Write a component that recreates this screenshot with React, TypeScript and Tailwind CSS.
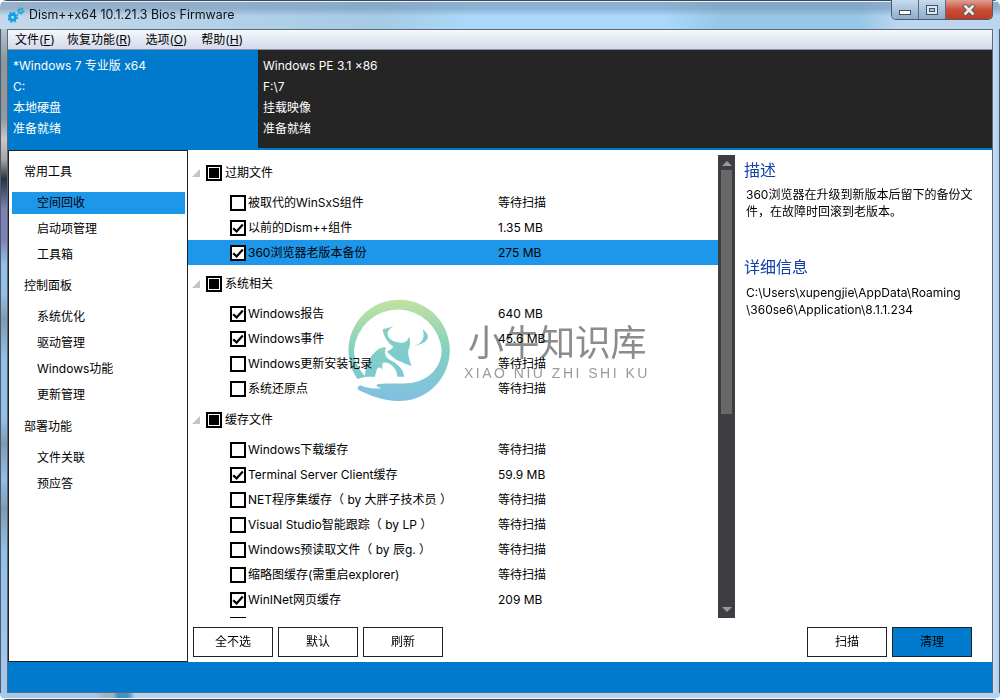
import { Fragment } from "react";

const font = "font-['Inter','Noto_Sans_CJK_SC',sans-serif]";

type Row = { label: string; value: string; checked?: boolean; selected?: boolean };
type Group = { title: string; rows: Row[] };

const groups: Group[] = [
  {
    title: "过期文件",
    rows: [
      { label: "被取代的WinSxS组件", value: "等待扫描" },
      { label: "以前的Dism++组件", value: "1.35 MB", checked: true },
      { label: "360浏览器老版本备份", value: "275 MB", checked: true, selected: true },
    ],
  },
  {
    title: "系统相关",
    rows: [
      { label: "Windows报告", value: "640 MB", checked: true },
      { label: "Windows事件", value: "45.6 MB", checked: true },
      { label: "Windows更新安装记录", value: "等待扫描" },
      { label: "系统还原点", value: "等待扫描" },
    ],
  },
  {
    title: "缓存文件",
    rows: [
      { label: "Windows下载缓存", value: "等待扫描" },
      { label: "Terminal Server Client缓存", value: "59.9 MB", checked: true },
      { label: "NET程序集缓存（ by 大胖子技术员 ）", value: "等待扫描" },
      { label: "Visual Studio智能跟踪（ by LP ）", value: "等待扫描" },
      { label: "Windows预读取文件（ by 辰g. ）", value: "等待扫描" },
      { label: "缩略图缓存(需重启explorer)", value: "等待扫描" },
      { label: "WinINet网页缓存", value: "209 MB", checked: true },
      { label: "Windows字体缓存", value: "等待扫描" },
    ],
  },
];

const sideNav = [
  { title: "常用工具", top: "mt-[9px]", items: ["空间回收", "启动项管理", "工具箱"] },
  { title: "控制面板", top: "mt-[8px]", items: ["系统优化", "驱动管理", "Windows功能", "更新管理"] },
  { title: "部署功能", top: "mt-[9px]", items: ["文件关联", "预应答"] },
];

function Check() {
  return (
    <svg width="12" height="12" viewBox="0 0 12 12" fill="none">
      <path d="M1.2 6.2 L4.6 9.4 L10.8 2.4" stroke="#000" strokeWidth="2.2" />
    </svg>
  );
}

function ListRow({ row }: { row: Row }) {
  return (
    <div className={`flex items-center h-[25px] pl-[42px] text-[12px] text-black ${row.selected ? "bg-[#1c97ea]" : ""}`}>
      <span className="w-[16px] h-[16px] border-2 border-black bg-white flex items-center justify-center shrink-0">
        {row.checked && <Check />}
      </span>
      <span className="ml-[2px] w-[250px] whitespace-nowrap">{row.label}</span>
      <span>{row.value}</span>
    </div>
  );
}

function Btn({ label, primary }: { label: string; primary?: boolean }) {
  return (
    <button className={`w-[80px] h-[30px] border border-[#222] text-[12px] text-black ${primary ? "bg-[#007acc]" : "bg-white"}`}>
      {label}
    </button>
  );
}

function WinControls() {
  return (
    <div className="flex h-[20px] border border-t-0 border-[#4d5a68] rounded-b-[5px] overflow-hidden">
      <div className="w-[27px] border-r border-[#5c6b7a] bg-[linear-gradient(#c6dbee,#a9c4dd_50%,#8fadc9)] flex items-center justify-center">
        <span className="mt-[5px] w-[12px] h-[5px] bg-white border border-[#43505e]" />
      </div>
      <div className="w-[27px] border-r border-[#5c6b7a] bg-[linear-gradient(#c6dbee,#a9c4dd_50%,#8fadc9)] flex items-center justify-center">
        <span className="w-[12px] h-[10px] border border-[#43505e] bg-[#dfe8f1] flex items-center justify-center">
          <span className="w-[6px] h-[4px] border border-[#43505e] bg-[#a9c4dd]" />
        </span>
      </div>
      <div className="w-[46px] bg-[linear-gradient(#e0a195,#c9503a_50%,#bf3a22)] flex items-center justify-center">
        <svg width="14" height="12" viewBox="0 0 14 12">
          <path d="M2 1 L12 11 M12 1 L2 11" stroke="#4a4f55" strokeWidth="4.4" />
          <path d="M2.5 1.5 L11.5 10.5 M11.5 1.5 L2.5 10.5" stroke="#f2ece6" strokeWidth="2.8" />
        </svg>
      </div>
    </div>
  );
}

function AppIcon() {
  return (
    <svg width="18" height="18" viewBox="0 0 18 18" fill="none">
      <circle cx="4.6" cy="12.2" r="2.8" stroke="#0a9fe8" strokeWidth="2.6" />
      <circle cx="4.6" cy="12.2" r="4.8" stroke="#0a9fe8" strokeWidth="1.6" strokeDasharray="2 1.8" />
      <circle cx="12.6" cy="6" r="1.8" stroke="#22a9dc" strokeWidth="1.8" />
      <circle cx="12.6" cy="6" r="3.2" stroke="#22a9dc" strokeWidth="1.2" strokeDasharray="1.6 1.6" />
    </svg>
  );
}

function Watermark() {
  return (
    <div className={`absolute left-[340px] top-[295px] flex items-start pointer-events-none mix-blend-multiply ${font}`}>
      <svg width="115" height="110" viewBox="0 0 345 330" fill="none">
        <defs>
          <linearGradient id="wm" x1="0" y1="0" x2="0" y2="1">
            <stop offset="0" stopColor="#c2e2a0" />
            <stop offset="0.5" stopColor="#82d0c0" />
            <stop offset="1" stopColor="#82bfe2" />
          </linearGradient>
          <linearGradient id="wb" x1="0" y1="0" x2="0" y2="1">
            <stop offset="0" stopColor="#84d2c0" />
            <stop offset="1" stopColor="#7cc8d4" />
          </linearGradient>
        </defs>
        <path
          d="M52 252 A152 152 0 1 1 175 318 C130 318 90 302 55 285 C50 278 55 270 65 272 C80 278 100 282 125 280 C115 278 105 272 112 268 C140 262 190 270 225 262 C270 250 305 215 305 165 A132 133 0 0 0 42 165 C42 195 55 225 78 245 Z"
          fill="url(#wm)"
        />
        <path
          d="M128 103 C140 100 150 97 161 93 C150 100 138 112 145 125 C150 135 165 143 190 143 C200 140 205 133 206 125 C212 135 212 150 205 165 C203 180 208 198 215 213 C200 210 185 200 170 195 C155 185 148 175 140 170 C150 165 158 160 160 155 C145 145 130 125 128 103 Z"
          fill="url(#wb)"
        />
        <path
          d="M75 245 C75 215 90 180 112 165 C122 158 132 155 138 158 C132 170 134 185 150 195 C170 205 190 220 193 245 L172 245 C172 228 162 214 148 206 C130 196 112 205 105 245 Z"
          fill="url(#wb)"
        />
        <path d="M108 222 C112 212 120 206 130 205 C126 210 126 216 128 224 C122 216 114 216 108 222 Z" fill="url(#wb)" />
        <path d="M218 155 C240 148 258 135 248 103 C265 115 270 130 255 140 C245 146 232 150 218 155 Z" fill="url(#wb)" />
      </svg>
      <div className="ml-[13px] mt-[26px] flex flex-col">
        <span className="text-[36px] leading-[44px] text-[#8c8c8c] tracking-[-0.4px] whitespace-nowrap">小牛知识库</span>
        <span className="text-[14px] leading-[18px] mt-[-1px] ml-[-4px] text-[#9a9a9a] font-['Liberation_Sans',sans-serif] tracking-[2.5px] whitespace-nowrap">XIAO NIU ZHI SHI KU</span>
      </div>
    </div>
  );
}

export default function App() {
  return (
    <div className={`relative w-[1000px] h-[700px] overflow-hidden flex flex-col text-[12px] rounded-[7px] bg-[#a9cdec] ${font}`}>
      <div className="h-[29px] shrink-0 flex items-start pl-[8px] pr-[7px] shadow-[inset_0_1px_0_#3b4a58,inset_0_2px_0_#e8f2fa] bg-[linear-gradient(180deg,rgba(110,140,175,0.55)_0%,rgba(110,140,175,0.5)_30%,rgba(110,140,175,0)_55%),linear-gradient(90deg,#c4d9ea_0%,#b0d0e8_25%,#a4cbe6_38%,#acd9fb_48%,#acd9fb_66%,#97c7e6_72%,#97c7e6_86%,#bcd6f0_90%)]">
        <div className="mt-[5px]"><AppIcon /></div>
        <span className="ml-[3px] mt-[6px] text-[12.4px] leading-[17px] text-[#111] whitespace-nowrap">Dism++x64 10.1.21.3 Bios Firmware</span>
        <div className="ml-auto"><WinControls /></div>
      </div>

      <div className="flex-1 flex min-h-0">
        <div className="w-[7px] shrink-0 shadow-[inset_1px_0_0_#4a5a6a] bg-[linear-gradient(180deg,#b8c4d0_0px,#8d979f_30px,#8f9aa2_90px,#c8c8c8_110px,#a8a8a8_130px,#28323f_150px,#7c82b6_180px,#7c82b6_210px,#93bfe8_235px,#93bfe8_265px,#7f9bb0_290px,#93bfe8_330px,#93bfe8_390px,#7f9bb0_415px,#93bfe8_450px,#7f9bb0_480px,#93bfe8_520px,#a5c9ee_100%)]" />
        <div className="flex-1 min-w-0 border border-[#5b6a78] flex flex-col min-h-0 bg-white">
          <div className="h-[20px] shrink-0 flex items-center bg-[linear-gradient(#f6f8fb,#d3daec)] border-b border-[#8b93a8] text-[12px] text-black">
            <span className="ml-[7px]">文件(<u>F</u>)</span>
            <span className="ml-[12px]">恢复功能(<u>R</u>)</span>
            <span className="ml-[14px]">选项(<u>O</u>)</span>
            <span className="ml-[14px]">帮助(<u>H</u>)</span>
          </div>

          <div className="h-[100px] shrink-0 flex text-white text-[12px] leading-[21px] border-b-2 border-[#007acc]">
            <div className="w-[250px] bg-[#007acc] pl-[5px] pt-[5px]">
              <div>*Windows 7 专业版 x64</div>
              <div>C:</div>
              <div>本地硬盘</div>
              <div>准备就绪</div>
            </div>
            <div className="flex-1 bg-[#252526] pl-[5px] pt-[5px]">
              <div>Windows PE 3.1 x86</div>
              <div>F:\7</div>
              <div>挂载映像</div>
              <div>准备就绪</div>
            </div>
          </div>

          <div className="flex-1 flex min-h-0">
            <div className="w-[180px] shrink-0 border border-[#222] pl-[3px] pr-[2px] text-black">
              {sideNav.map((s) => (
                <Fragment key={s.title}>
                  <div className={`${s.top} h-[24px] pl-[12px] flex items-center`}>{s.title}</div>
                  <div className="mt-[8px] flex flex-col gap-[4px]">
                    {s.items.map((it) => (
                      <div key={it} className={`h-[22px] pl-[25px] flex items-center ${it === "空间回收" ? "bg-[#1c97ea]" : ""}`}>{it}</div>
                    ))}
                  </div>
                </Fragment>
              ))}
            </div>

            <div className="flex-1 flex flex-col min-w-0">
              <div className="flex-1 flex min-h-0">
                <div className="w-[530px] shrink-0 pt-[11px] overflow-hidden">
                  {groups.map((g) => (
                    <Fragment key={g.title}>
                      <div className={`flex items-center h-[24px] pl-[4px] ${g.title === "过期文件" ? "" : "mt-[7px]"}`}>
                        <svg width="8" height="8" viewBox="0 0 8 8"><path d="M8 0 V8 H0 Z" fill="#c4c4c4" /></svg>
                        <span className="ml-[6px] w-[16px] h-[16px] border-2 border-black flex items-center justify-center">
                          <span className="w-[10px] h-[10px] bg-black" />
                        </span>
                        <span className="ml-[3px] text-black">{g.title}</span>
                      </div>
                      <div className="mt-[5px]">
                        {g.rows.map((r) => <ListRow key={r.label} row={r} />)}
                      </div>
                    </Fragment>
                  ))}
                </div>

                <div className="w-[17px] h-[463px] mt-[5px] shrink-0 bg-[#3e3e42] flex flex-col items-center">
                  <svg className="mt-[6px]" width="10" height="5" viewBox="0 0 10 5"><path d="M5 0 L10 5 H0 Z" fill="#999" /></svg>
                  <div className="w-[11px] h-[244px] mt-[4px] bg-[#686868]" />
                  <svg className="mt-auto mb-[6px]" width="10" height="5" viewBox="0 0 10 5"><path d="M0 0 H10 L5 5 Z" fill="#999" /></svg>
                </div>

                <div className="flex-1 pl-[9px] pr-[14px] pt-[9px] text-black min-w-0">
                  <div className="text-[16px] leading-[22px] text-[#0f3fa8]">描述</div>
                  <div className="ml-[2px] mt-[5px] leading-[17px] text-[12px]">360浏览器在升级到新版本后留下的备份文件，在故障时回滚到老版本。</div>
                  <div className="mt-[36px] text-[16px] leading-[22px] text-[#0f3fa8]">详细信息</div>
                  <div className="ml-[2px] mt-[6px] leading-[17px] text-[12px] whitespace-nowrap">C:\Users\xupengjie\AppData\Roaming<br />\360se6\Application\8.1.1.234</div>
                </div>
              </div>

              <div className="h-[44px] shrink-0 flex items-start pt-[9px] pl-[5px] pr-[20px] gap-[5px]">
                <Btn label="全不选" />
                <Btn label="默认" />
                <Btn label="刷新" />
                <div className="ml-auto flex gap-[5px]">
                  <Btn label="扫描" />
                  <Btn label="清理" primary />
                </div>
              </div>
            </div>
          </div>

          <div className="h-[30px] shrink-0 bg-[#007acc]" />
        </div>
        <div className="w-[7px] shrink-0 shadow-[inset_-1px_0_0_#4a5a6a] bg-[linear-gradient(90deg,#c8dff4,#a9cdec)]" />
      </div>

      <div className="h-[7px] shrink-0 shadow-[inset_0_-1px_0_#3b4a58,inset_0_-2px_0_#eef6fd] bg-[linear-gradient(90deg,#a5c9ee_0px,#a5c9ee_95px,#9fb4c4_105px,#9fb4c4_113px,#3f93c4_118px,#3f93c4_128px,#b0d3f5_135px,#b0d3f5_100%)]" />
      <Watermark />
    </div>
  );
}
